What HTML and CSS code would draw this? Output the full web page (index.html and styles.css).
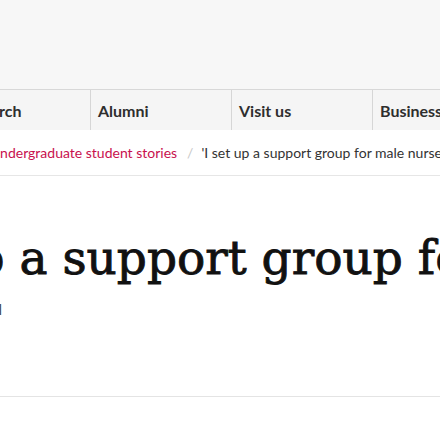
FILE: index.html
```html
<!DOCTYPE html>
<html>

<head>
    <title>'I set up a support group for male nurses'</title>
    <meta name="viewport" content="width=device-width, initial-scale=1">
    <link rel="stylesheet" href="styles.css">
</head>

<body>
    <header class="masthead"></header>

    <nav class="main-nav">
        <ul class="nav-list">
            <li class="nav-item"><a href="#">Research</a></li>
            <li class="nav-item"><a href="#">Alumni</a></li>
            <li class="nav-item"><a href="#">Visit us</a></li>
            <li class="nav-item"><a href="#">Business</a></li>
        </ul>
    </nav>

    <div class="breadcrumb-bar">
        <ol class="breadcrumb">
            <li><a href="#">Undergraduate student stories</a></li>
            <li class="sep">/</li>
            <li class="current">'I set up a support group for male nurses'</li>
        </ol>
    </div>

    <main class="article">
        <h1 class="article-title">'I set up a support group for male nurses'</h1>
        <p class="article-meta">Published 14 April</p>
    </main>

    <div class="rule"></div>
</body>

</html>
```

FILE: styles.css
```css
body {
    font-family: Lato, "Open Sans", Arial, sans-serif;
    margin: 0;
    padding: 0;
    background-color: #fff;
    overflow: hidden;
}

.masthead {
    height: 89px;
    background-color: #f7f7f7;
    border-bottom: 1px solid #d8d8d8;
}

.main-nav {
    background-color: #f5f5f5;
    height: 40px;
    overflow: hidden;
}

.nav-list {
    display: flex;
    list-style: none;
    margin: 0 0 0 -50px;
    padding: 0;
    height: 100%;
}

.nav-item {
    box-sizing: border-box;
    flex: 0 0 141px;
    border-right: 1px solid #d6d6d6;
    display: flex;
    align-items: center;
    padding-left: 7px;
}

.nav-item a {
    color: #2e2e2e;
    font-weight: bold;
    font-size: 16px;
    text-decoration: none;
    white-space: nowrap;
}

.breadcrumb-bar {
    height: 45px;
    border-bottom: 1px solid #e6e6e6;
    overflow: hidden;
}

.breadcrumb {
    display: flex;
    align-items: center;
    list-style: none;
    margin: 0 0 0 -10px;
    padding: 14px 0 0;
    font-size: 14px;
    white-space: nowrap;
}

.breadcrumb a {
    color: #c8104e;
    text-decoration: none;
}

.breadcrumb .sep {
    color: #c8c8c8;
    margin: 0 8px 0 10px;
}

.breadcrumb .current {
    color: #333;
}

.article {
    height: 220px;
    overflow: hidden;
}

.article-title {
    font-family: "DejaVu Serif", Georgia, serif;
    font-weight: normal;
    font-size: 47px;
    line-height: 1.2;
    color: #111;
    -webkit-text-stroke: 0.9px #111;
    white-space: nowrap;
    margin: 54px 0 0 -188px;
}

.article-meta {
    width: 200px;
    margin: 14px 0 0 -198px;
    text-align: right;
    font-size: 15px;
    color: #444;
}

.rule {
    border-top: 1px solid #e4e4e4;
}
```
